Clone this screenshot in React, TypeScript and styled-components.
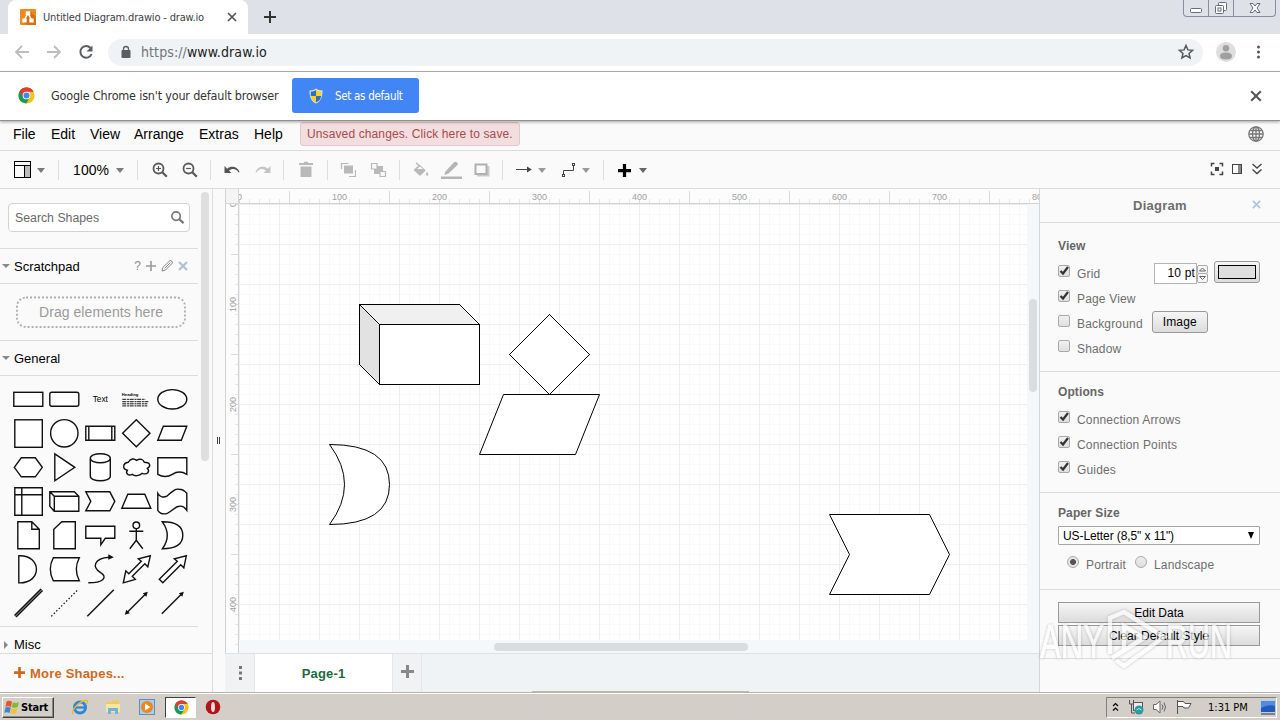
import React from 'react';
import styled, { createGlobalStyle } from 'styled-components';

const GlobalStyle = createGlobalStyle`
  * { box-sizing: border-box; }
  body { margin: 0; background: #fff; overflow: hidden; }
  svg { display: block; flex: none; }
`;

const sans = `'Liberation Sans', Arial, sans-serif`;
const ui = `'DejaVu Sans Condensed', 'DejaVu Sans', sans-serif`;

const Page = styled.div`
  width: 1280px;
  height: 720px;
  display: flex;
  flex-direction: column;
  font-family: ${sans};
  font-size: 12px;
  color: #000;
  white-space: nowrap;
  overflow: hidden;
`;

/* ---------- Browser chrome ---------- */
const TabStrip = styled.div`
  height: 34px;
  flex: none;
  display: flex;
  background: #dee1e8;
  padding-left: 8px;
`;
const BrowserTab = styled.div`
  width: 240px;
  height: 34px;
  background: #fff;
  border-radius: 8px 8px 0 0;
  display: flex;
  align-items: center;
  padding: 0 11px 0 12px;
  font: 11px ${ui};
  color: #3c4043;
`;
const TabTitle = styled.span`
  flex: 1;
  margin-left: 7px;
  letter-spacing: -0.17px;
`;
const NewTab = styled.div`
  width: 44px;
  display: flex;
  align-items: center;
  justify-content: center;
`;
const WindowButtons = styled.div`
  margin-left: auto;
  margin-right: 4px;
  height: 17px;
  display: flex;
  border: 1px solid #8a8e99;
  border-top: 0;
  border-radius: 0 0 4px 4px;
`;
const WindowButton = styled.div<{ $w: number }>`
  width: ${p => p.$w}px;
  display: flex;
  align-items: center;
  justify-content: center;
  & + & { border-left: 1px solid #8a8e99; }
`;
const AddressBar = styled.div`
  height: 38px;
  flex: none;
  display: flex;
  align-items: center;
  background: #fff;
  border-bottom: 1px solid #b2b2b2;
  padding: 0 12px 2px 12px;
`;
const NavIcons = styled.div`
  display: flex;
  gap: 12px;
  width: 96px;
`;
const Omnibox = styled.div`
  width: 1095px;
  height: 27px;
  border-radius: 14px;
  background: #eff3f6;
  display: flex;
  align-items: center;
  padding: 0 8px 0 12px;
  margin-top: 1px;
  font: 14px ${ui};
  color: #202124;
`;
const Url = styled.span`
  flex: 1;
  margin-left: 9px;
  letter-spacing: 0.1px;
  span { color: #70757a; }
`;
const BrowserActions = styled.div`
  display: flex;
  align-items: center;
  margin-left: 13px;
  gap: 12px;
`;
const InfoBar = styled.div`
  height: 49px;
  flex: none;
  display: flex;
  align-items: center;
  background: #fff;
  border-bottom: 1px solid #8f8f8f;
  box-shadow: 0 1px 3px rgba(0, 0, 0, 0.35);
  position: relative;
  padding: 0 18px 1px 18px;
  font: 12.5px ${ui};
  color: #333;
`;
const InfoText = styled.span`
  margin-left: 16px;
  width: 241px;
  letter-spacing: -0.19px;
`;
const DefaultButton = styled.div`
  width: 127px;
  height: 35px;
  border-radius: 3px;
  background: #4285f4;
  color: #fff;
  display: flex;
  align-items: center;
  padding-left: 16px;
  gap: 11px;
  font-size: 11.5px;
  letter-spacing: -0.3px;
  margin-right: auto;
`;

/* ---------- Application bars ---------- */
const MenuBar = styled.div`
  height: 30px;
  flex: none;
  display: flex;
  align-items: center;
  background: #fafafa;
  border-bottom: 1px solid #dcdcdc;
  padding: 0 16px 3px 13px;
  > svg { margin-bottom: 1px; }
`;
const MenuItem = styled.div<{ $w: number }>`
  width: ${p => p.$w}px;
  font-size: 14px;
`;
const Notice = styled.div`
  height: 24px;
  width: 220px;
  border: 1px solid #e8c6c8;
  background: #f2dede;
  border-radius: 3px;
  color: #a94a50;
  padding-left: 6px;
  line-height: 22px;
  letter-spacing: 0.12px;
  margin: 0 auto 1px 0;
`;
const ToolBar = styled.div`
  height: 38px;
  flex: none;
  display: flex;
  align-items: center;
  background: #fafafa;
  border-bottom: 1px solid #dcdcdc;
  padding: 1px 15px 0 8px;
`;
const Tool = styled.div<{ $w: number; $gap?: number }>`
  width: ${p => p.$w}px;
  margin-left: ${p => p.$gap ?? 0}px;
  display: flex;
  justify-content: center;
  font-size: 14px;
`;
const Rule = styled.i`
  width: 1px;
  height: 20px;
  background: #dedede;
`;
const Caret = styled.i<{ $c?: string }>`
  border: 4.5px solid transparent;
  border-top: 5px solid ${p => p.$c ?? '#7a7a7a'};
  border-bottom: 0;
`;
const ToolRight = styled.div`
  margin-left: auto;
  margin-bottom: 2px;
  display: flex;
  gap: 4px;
`;

/* ---------- Body ---------- */
const Body = styled.div`
  height: 503px;
  flex: none;
  display: flex;
`;
const Sidebar = styled.div`
  width: 213px;
  background: #fafafa;
  border-right: 1px solid #dcdcdc;
  display: flex;
  flex-direction: column;
`;
const SidebarScroll = styled.div`
  height: 464px;
  display: flex;
  overflow: hidden;
`;
const SidebarContent = styled.div`
  width: 198px;
`;
const ScrollThumb = styled.div<{ $w: number; $h: number; $x: number; $y: number; $c?: string }>`
  width: ${p => p.$w}px;
  height: ${p => p.$h}px;
  margin: ${p => p.$y}px 0 0 ${p => p.$x}px;
  border-radius: 4px;
  background: ${p => p.$c ?? '#d9dde0'};
`;
const SearchWrap = styled.div`
  height: 60px;
  padding: 14px 8px 0;
  border-bottom: 1px solid #dcdcdc;
`;
const SearchBox = styled.div`
  height: 29px;
  border: 1px solid #d3d3d3;
  border-radius: 4px;
  background: #fff;
  display: flex;
  align-items: center;
  justify-content: space-between;
  padding: 0 4px 0 6px;
  color: #6a6a6a;
  font-size: 12.3px;
`;
const SectionTitle = styled.div<{ $h?: number; $last?: boolean }>`
  height: ${p => p.$h ?? 35}px;
  border-bottom: ${p => (p.$last ? 0 : 1)}px solid #dcdcdc;
  display: flex;
  align-items: center;
  font-size: 13px;
  padding: 0 10px 0 2px;
  svg:first-child { margin-right: 4px; }
`;
const SectionTools = styled.div`
  margin-left: auto;
  display: flex;
  align-items: center;
  gap: 3px;
  color: #8a8a8a;
  font-size: 12px;
  span { margin-right: 2px; }
`;
const DropWrap = styled.div`
  height: 57px;
  border-bottom: 1px solid #dcdcdc;
  padding: 12px 12px 0 16px;
`;
const Palette = styled.div`
  height: 251px;
  border-bottom: 1px solid #dcdcdc;
  padding: 6px 8px 0 10px;
  display: grid;
  grid-template-columns: repeat(5, 36px);
  grid-auto-rows: 34px;
`;
const MoreShapes = styled.div`
  height: 39px;
  border-top: 1px solid #dcdcdc;
  display: flex;
  align-items: center;
  padding-left: 14px;
  gap: 5px;
  color: #cf6a1e;
  font: bold 13px ${sans};
  letter-spacing: 0.2px;
  svg { margin-bottom: 2px; }
`;
const Splitter = styled.div`
  width: 12px;
  background: #fafafa;
  display: flex;
  align-items: center;
  justify-content: center;
`;
const Editor = styled.div`
  width: 814px;
  display: flex;
  flex-direction: column;
`;
const EditorRow = styled.div<{ $h: number }>`
  height: ${p => p.$h}px;
  display: flex;
`;
const RulerClip = styled.div`
  width: 800px;
  overflow: hidden;
`;
const VTrack = styled.div`
  width: 12px;
  background: #f4f8fb;
`;
const HTrack = styled.div`
  flex: 1;
  background: #f5f8fb;
`;
const PageTabs = styled.div`
  height: 39px;
  background: #eff3f6;
  border-top: 1px solid #dde1e4;
  display: flex;
`;
const TabCell = styled.div<{ $w: number; $on?: boolean }>`
  width: ${p => p.$w}px;
  background: ${p => (p.$on ? '#fff' : '#f0f2f3')};
  border-right: 1px solid #e4e8ea;
  display: flex;
  align-items: center;
  justify-content: center;
  font: bold 13px ${sans};
  letter-spacing: 0.15px;
  color: #1d6b3d;
`;
const ProgressEdge = styled.i`
  width: 217px;
  height: 1px;
  margin: auto 0 0 110px;
  background: #b4bda8;
`;

/* ---------- Format panel ---------- */
const Panel = styled.div`
  width: 241px;
  background: #fafafa;
  border-left: 1px solid #d4d6d8;
  color: #6e6e6e;
`;
const PanelHead = styled.div`
  height: 34px;
  border-bottom: 1px solid #dcdcdc;
  display: flex;
  align-items: center;
  padding: 0 19px 0 93px;
  justify-content: space-between;
  font: bold 13px ${sans};
  letter-spacing: 0.25px;
  svg { margin-bottom: 2px; }
`;
const Group = styled.div<{ $h: number; $top: number }>`
  height: ${p => p.$h}px;
  padding: ${p => p.$top}px 20px 0 18px;
  border-bottom: 1px solid #dcdcdc;
`;
const GroupTitle = styled.div<{ $mb: number }>`
  font: bold 12px/14px ${sans};
  letter-spacing: 0.1px;
  margin-bottom: ${p => p.$mb}px;
  color: #666;
`;
const OptionRow = styled.div`
  height: 25px;
  display: flex;
  align-items: center;
  letter-spacing: 0.17px;
`;
const CheckBox = styled.span`
  width: 12px;
  height: 12px;
  margin: 0 7px 5px 0;
  border: 1px solid #a9a9a9;
  border-radius: 2px;
  background: linear-gradient(#f0f0f0, #dedede);
`;
const Stepper = styled.div`
  margin-left: auto;
  display: flex;
  align-items: center;
`;
const StepInput = styled.div`
  width: 43px;
  height: 21px;
  background: #fff;
  border: 1px solid #b4b4b4;
  color: #000;
  text-align: right;
  line-height: 19px;
  padding-right: 1px;
`;
const PushButton = styled.div<{ $w: number; $h: number; $r?: number; $gap?: number }>`
  width: ${p => p.$w}px;
  height: ${p => p.$h}px;
  border: 1px solid #999;
  border-radius: ${p => p.$r ?? 0}px;
  background: linear-gradient(#f6f6f6, #dcdcdc);
  color: #000;
  display: flex;
  align-items: center;
  justify-content: center;
  ${p => p.$gap && `margin: 0 0 3px ${p.$gap}px;`}
`;
const Swatch = styled.i`
  width: 38px;
  height: 14px;
  border: 1px solid #000;
  background: #dedede;
`;
const SelectBox = styled.div`
  height: 19px;
  margin-top: 6px;
  border: 1px solid #a6a6a6;
  border-radius: 1px;
  background: #fff;
  color: #000;
  display: flex;
  align-items: center;
  justify-content: space-between;
  padding: 0 4px;
  letter-spacing: -0.09px;
`;
const RadioRow = styled.div`
  display: flex;
  align-items: center;
  height: 25px;
  margin-top: 7px;
  padding-left: 9px;
  letter-spacing: 0.17px;
`;
const RadioLabel = styled.span`
  width: 49px;
`;
const Radio = styled.i<{ $on?: boolean }>`
  width: 12px;
  height: 12px;
  border: 1px solid #aaa;
  border-radius: 50%;
  margin: 0 7px 5px 0;
  background: ${p => (p.$on ? 'radial-gradient(circle, #555 0 2.6px, #e6e6e6 3.3px)' : 'linear-gradient(#eee, #dedede)')};
`;
const ButtonStack = styled.div`
  display: grid;
  gap: 2px;
`;
const Watermark = styled.div`
  position: absolute;
  left: 1036px;
  top: 604px;
  pointer-events: none;
  opacity: 0.68;
  filter: drop-shadow(0 0 1.5px rgba(0, 0, 0, 0.32));
`;

/* ---------- Taskbar ---------- */
const TaskBar = styled.div`
  height: 28px;
  flex: none;
  background: #d4cec8;
  border-top: 1px solid #b9b5ac;
  box-shadow: inset 0 1px 0 #fff;
  display: flex;
  align-items: center;
  padding: 1px 3px 0 2px;
`;
const StartButton = styled.div`
  width: 52px;
  height: 21px;
  border: 1px solid;
  border-color: #fff #404040 #404040 #fff;
  box-shadow: inset -1px -1px 0 #8c8880;
  display: flex;
  align-items: center;
  gap: 1px;
  padding-left: 1px;
  font: bold 11px ${ui};
  letter-spacing: -0.2px;
  margin-right: 10px;
`;
const TaskIcon = styled.div<{ $active?: boolean }>`
  width: 31px;
  height: 21px;
  margin-right: ${p => (p.$active ? 2 : 2.6)}px;
  display: flex;
  align-items: center;
  justify-content: center;
  ${p => p.$active && 'background:#fff;border:1px solid;border-color:#404040 #fff #fff #404040;padding-left:2px;'}
`;
const Tray = styled.div`
  margin-left: auto;
  width: 171px;
  height: 21px;
  border: 1px solid;
  border-color: #808080 #fff #fff #808080;
  display: flex;
  align-items: center;
  padding: 0 0 0 5px;
  gap: 8px;
  font: 11px ${ui};
  letter-spacing: 0;
`;
const Clock = styled.span`
  margin: 0 auto 0 8px;
`;

/* ---------- Drawings ---------- */
const Cross = ({ s = 10, c = '#555', w = 2 }: { s?: number; c?: string; w?: number }) => (
  <svg width={s} height={s} viewBox="0 0 10 10" stroke={c} strokeWidth={w}><path d="M1 1L9 9M9 1L1 9" /></svg>
);
const Plus = ({ s = 12, c = '#555', w = 2 }: { s?: number; c?: string; w?: number }) => (
  <svg width={s} height={s} viewBox="0 0 12 12" stroke={c} strokeWidth={w}><path d="M6 0V12M0 6H12" /></svg>
);
const ChromeLogo = ({ s = 18 }: { s?: number }) => (
  <svg width={s} height={s} viewBox="0 0 18 18">
    <circle cx="9" cy="9" r="8.5" fill="#fbc116" />
    <path d="M9 9L1.6 4.8A8.5 8.5 0 0 1 16.4 4.8H9Z" fill="#db3f34" />
    <path d="M9 9L1.6 4.8A8.5 8.5 0 0 0 8.7 17.5L12.6 11Z" fill="#119d59" />
    <path d="M1.6 4.8A8.5 8.5 0 0 1 16.4 4.8H9A4.2 4.2 0 0 0 5.3 11Z" fill="#db3f34" />
    <circle cx="9" cy="9" r="4.1" fill="#fff" />
    <circle cx="9" cy="9" r="3.2" fill="#4285f4" />
  </svg>
);
const DrawioLogo = () => (
  <svg width="16" height="16" viewBox="0 0 16 16">
    <rect width="16" height="16" rx="1" fill="#ee8a1d" />
    <path d="M10 2L16 8V16H7L3 13Z" fill="#d9700f" />
    <path d="M8 4L4.5 11M8 4L11.5 11" stroke="#fff" strokeWidth="1.5" />
    <path d="M5.7 2.3h4.6v4H5.7zM2.3 9.5h4.4v4H2.3zM9.3 9.5h4.4v4H9.3z" fill="#fff" />
  </svg>
);
const Shield = () => (
  <svg width="16" height="16" viewBox="0 0 16 16">
    <path d="M8 .5C6 2 4 2.4 1.5 2.4 1.3 9 3.5 13.5 8 15.6 12.5 13.5 14.7 9 14.5 2.4 12 2.4 10 2 8 .5Z" fill="#d8dfe6" />
    <path d="M8 2C6.3 3.2 4.6 3.5 2.8 3.6V8H8Z" fill="#2d6fb8" />
    <path d="M8 2C9.7 3.2 11.4 3.5 13.2 3.6V8H8Z" fill="#f8d21c" />
    <path d="M2.8 8C3.3 11 5 13.2 8 14.5V8Z" fill="#f8d21c" />
    <path d="M13.2 8C12.7 11 11 13.2 8 14.5V8Z" fill="#2d6fb8" />
  </svg>
);
const Magnifier = ({ sign }: { sign?: string }) => (
  <svg width="16" height="16" viewBox="0 0 16 16" fill="none" stroke="#5a5a5a">
    <circle cx="6.5" cy="6.5" r="5" strokeWidth="1.8" />
    <path d="M10.3 10.3L14.8 14.8" strokeWidth="2.3" />
    {sign && <path d={sign} strokeWidth="1.2" />}
  </svg>
);
const LayoutIcon = () => (
  <svg width="18" height="18" viewBox="0 0 18 18" fill="none" stroke="#000" shapeRendering="crispEdges">
    <rect x="12" y="5" width="5" height="12" fill="#bbb" stroke="none" />
    <path d="M1.5 .5H17.5V16.5H1.5ZM1.5 4.5H17.5M11.5 4.5V16.5" strokeWidth="1" />
  </svg>
);
const UndoIcon = ({ flip, c }: { flip?: boolean; c: string }) => (
  <svg width="16" height="16" viewBox="0 0 16 16">
    <path transform={flip ? 'translate(16 0) scale(-1 1)' : undefined} d="M.5 4V11H7.5L5 8.5C8 6 12.5 6.2 14.6 10.6L15.6 10.2C13.5 4.3 7 3.5 3.2 6.7Z" fill={c} />
  </svg>
);
const TrashIcon = () => (
  <svg width="16" height="18" viewBox="0 0 16 18" fill="#b9b9b9"><path d="M1 2H5.5L6.5 .8H9.5L10.500 2H15V4H1ZM2.5 5.5H13.5V16H2.5Z" /></svg>
);
const FrontIcon = () => (
  <svg width="16" height="16" viewBox="0 0 16 16" fill="none" stroke="#b9b9b9">
    <rect x="4" y="3.5" width="9" height="8" fill="#b9b9b9" stroke="none" />
    <path d="M1.5 7V1.500H8.5M9 14.5H15.5V8" strokeWidth="1.2" />
  </svg>
);
const BackIcon = () => (
  <svg width="16" height="16" viewBox="0 0 16 16" fill="#fafafa" stroke="#b9b9b9">
    <rect x="4" y="4" width="9" height="8" fill="#b9b9b9" stroke="none" />
    <path d="M1.5 1.5H7V7H1.5ZM10 9.5H15.5V14.5H10Z" strokeWidth="1.2" />
  </svg>
);
const BucketIcon = () => (
  <svg width="18" height="16" viewBox="0 0 18 16"><path d="M4 .8L7 3.5" stroke="#b9b9b9" strokeWidth="1.5" /><path d="M7.5 2.5L13.8 8.5 8 14 1.5 8Z" fill="#b9b9b9" /><path d="M5 7L8 4.5 11 7Z" fill="#fafafa" /><path d="M15 9.5C16.2 11.5 17 13.5 15.2 13.8 13.4 13.5 14 11.5 15 9.5Z" fill="#b9b9b9" /></svg>
);
const PenIcon = () => (
  <svg width="22" height="20" viewBox="0 0 22 20" fill="#b5b5b5"><path d="M1 16.5H22V19H1ZM5 12L14 2.300Q15.5 1 17.200 2.400 18.6 4 17.2 5.300L8.500 13.500 4.500 15Z" /></svg>
);
const SquareIcon = () => (
  <svg width="16" height="16" viewBox="0 0 16 16"><rect x="3" y="4" width="12.5" height="10.5" fill="#ccc" /><rect x="1.5" y="2.5" width="11" height="9.5" fill="#fafafa" stroke="#b0b0b0" strokeWidth="2" /></svg>
);
const ArrowIcon = () => (
  <svg width="16" height="10" viewBox="0 0 16 10"><path d="M0 4.5H13" stroke="#444" strokeWidth="1" /><path d="M11 1.5L15.8 4.5 11 7.5Z" fill="#444" /></svg>
);
const ConnectorIcon = () => (
  <svg width="16" height="16" viewBox="0 0 16 16" fill="none" stroke="#444"><rect x="1.5" y="12.5" width="2" height="2" /><path d="M2.5 12.5V8.5H12.5V4" /><rect x="11.500" y="1.500" width="2" height="2" /></svg>
);
const GlobeIcon = () => (
  <svg width="16" height="16" viewBox="0 0 16 16" fill="none" stroke="#777" strokeWidth="1.3"><circle cx="8" cy="8" r="7.2" /><ellipse cx="8" cy="8" rx="3.5" ry="7.2" /><path d="M8 1V15M1 8H15M2 4.5H14M2 11.5H14" /></svg>
);
const Disclosure = ({ open }: { open?: boolean }) => (
  <svg width="8" height="8" viewBox="0 0 8 8" fill="#8a8a8a"><path d={open ? 'M0 2H8L4 6Z' : 'M2 0L6 4 2 8Z'} /></svg>
);
const Check = () => (
  <svg width="10" height="10" viewBox="0 0 10 10" fill="none" stroke="#333" strokeWidth="2.2"><path d="M1.500 5L4 7.500 9 1" /></svg>
);

const shapes: React.ReactNode[] = [
  <rect x="-14.5" y="-7" width="29" height="14" />,
  <rect x="-14.5" y="-7" width="29" height="14" rx="2" />,
  <text x="0" y="3" fontSize="8.3" textAnchor="middle" fill="#000" stroke="none">Text</text>,
  <g>
    <text x="-14.5" y="-3.2" fontSize="4.2" fontWeight="bold" fill="#000" stroke="none">Heading</text>
    <path d="M-14 0H9M-14 2.4H12M-14 4.5H11M-14 6.6H11" strokeWidth="1" strokeDasharray="4 .8 2 .6" />
  </g>,
  <ellipse rx="14.5" ry="9.7" />,

  <rect x="-13.5" y="-13.5" width="27.5" height="27.5" />,
  <circle r="13.7" />,
  <path d="M-14.5 -7H14.5V7H-14.5ZM-11.5 -7V7M11.5 -7V7" />,
  <path d="M0 -13.5L13.7 0 0 13.5 -13.7 0Z" />,
  <path d="M-9 -7H14.5L9 7H-14.5Z" />,

  <path d="M-14 0L-7 -9.5H7L14 0 7 9.5H-7Z" />,
  <path d="M-9.5 -13.5L10.5 0 -9.5 13.5Z" />,
  <path d="M-10 -9V9C-10 15 10 15 10 9V-9C10 -15 -10 -15 -10 -9C-10 -3 10 -3 10 -9" />,
  <path d="M-8 -5C-6 -9 -2 -9 0 -7 4 -9 7 -8 8 -5 14 -5 15 -1 11 1 14 4 11 8 6 6 3 9 -2 9 -4 7 -8 9 -11 6 -9 3 -14 2 -14 -4 -8 -5Z" />,
  <path d="M-14.5 -9.5H14.5V7Q7 2.5 0 7T-14.5 7Z" />,

  <path d="M-13.5 -13.5H14V14H-13.5ZM-6.5 -13.5V14M-13.5 -6.5H14" />,
  <path d="M-14.5 -9.5H10L14.5 -5V10H-10L-14.5 5ZM-10 10V-5H14.5M-10 -5L-14.5 -9.5" />,
  <path d="M-14.5 -9.5H9.5L14.5 0 9.5 9.5H-14.5L-9.5 0Z" />,
  <path d="M-14.5 7L-8.5 -7H8.5L14.5 7Z" />,
  <path d="M-14.5 -8Q-11 -2 -5 -5.500C0 -10 3 -13 7 -12Q11 -12 14.5 -8V9Q11 4 7 5C3 5 0 10 -5 12Q-11 14 -14.5 9Z" />,

  <path d="M-10.5 -13.5H3.5L11 -6V13.5H-10.5ZM3.5 -13.5V-6H11" />,
  <path d="M-2.5 -13.5H11V13.5H-10.5V-6Z" />,
  <path d="M-14.5 -9H14.5V3H5L.5 9.5V3H-14.5Z" />,
  <path d="M0 -6.500V5M-7 -4H7M0 5L-6.5 13.5M0 5L6.5 13.5M3.3 -10A3.3 3.3 0 1 1 -3.3 -10A3.3 3.3 0 1 1 3.3 -10" />,
  <path d="M-10 -13.5Q10.5 -13.5 10.5 0T-10 13.5Q0 0 -10 -13.5Z" />,

  <path d="M-9.5 -13.5C14 -14.5 14 14.5 -9.5 13.5Z" />,
  <path d="M-11 -11.5H15Q9 0 15 11.500H-11Q-17 0 -11 -11.5Z" />,
  <g><path d="M-12 13.500C3 13.5 8 8 0 3S-7 -11 9 -12" /><path d="M8 -15L13.5 -12 8 -9.5Z" fill="#111" stroke="none" /></g>,
  <path d="M14 -13.5L11.5 -2.5 8.5 -5.5 -4 7 -1 10 -13 13.5 -10.5 1.5 -7.5 4.5 5 -8 2 -10.5Z" />,
  <path d="M14 -13.5L11.5 -1.5 8.5 -4.5 -9.5 13.5 -13 10 5 -8 2 -10.5Z" />,

  <g><path d="M-13 13L13.5 -13.5" strokeWidth="3.600" /><path d="M-13 13L13.5 -13.5" stroke="#ccc" strokeWidth=".8" /></g>,
  <path d="M-13 13L13.5 -13.5" strokeDasharray="1.5 2" strokeWidth="1.2" />,
  <path d="M-13 13L13.5 -13.5" />,
  <g><path d="M-10 10L10 -10" /><path d="M11.5 -11.5L10 -6.5 6.5 -10ZM-11.5 11.5L-10 6.5 -6.5 10Z" fill="#111" stroke="none" /></g>,
  <g><path d="M-10.5 10.5L10 -10" /><path d="M11.5 -11.5L10 -6.5 6.5 -10Z" fill="#111" stroke="none" /></g>,
];

const Ruler = ({ vertical }: { vertical?: boolean }) => {
  const len = vertical ? 450 : 800;
  const marks: React.ReactNode[] = [];
  for (let u = 0; u < len; u += 10) {
    const p = u + 0.5;
    const t = u % 100 === 50 ? (vertical ? 8 : 12) : u % 50 === 0 ? 3 : 4;
    const off = 14 - t;
    marks.push(<path key={u} d={vertical ? `M${off} ${p}H14` : `M${p} ${off}V14`} stroke={u % 50 ? '#e6e6e6' : '#dadada'} />);
  }
  const labels: React.ReactNode[] = [];
  for (let u = 0; u <= len; u += 100) {
    labels.push(
      vertical
        ? <text key={u} transform={`translate(10.5 ${u + 0.5}) rotate(-90)`} textAnchor="middle">{u}</text>
        : <text key={u} x={u + 0.5} y="11" textAnchor="middle">{u}</text>
    );
  }
  return (
    <svg width={vertical ? 14 : 800} height={vertical ? 449 : 15} fontFamily={sans} fontSize="9" fill="#a0a0a0">
      <rect width="800" height="800" fill="#fcfcfc" />
      {marks}
      {labels}
      <path d={vertical ? 'M13.5 0V450M.5 0V450' : 'M0 14.5H800'} stroke="#d2d2d2" />
    </svg>
  );
};

const Canvas = () => (
  <svg width="788" height="436" viewBox="239 204 788 436" fill="#fff" stroke="#000" shapeRendering="crispEdges">
    <defs>
      <pattern id="grid" x="239" y="204" width="40" height="40" patternUnits="userSpaceOnUse">
        <path d="M10.5 0V40M20.5 0V40M30.5 0V40M0 10.5H40M0 20.5H40M0 30.5H40" stroke="#f9f9f9" />
        <path d="M.5 0V40M0 .5H40" stroke="#eeeeee" />
      </pattern>
    </defs>
    <rect x="239" y="204" width="788" height="436" stroke="none" />
    <rect x="239" y="204" width="788" height="436" fill="url(#grid)" stroke="none" />
    <path d="M359.5 304.5H459.5L479.5 324.5V384.5H379.5L359.5 364.5Z" />
    <path d="M359.5 304.5H459.5L479.5 324.5H379.5Z" fill="#f0f0f0" />
    <path d="M359.5 304.5L379.5 324.5V384.5L359.5 364.5Z" fill="#e2e2e2" />
    <path d="M549.5 314.5L589.5 354.5 549.5 394.5 509.5 354.5Z" />
    <g shapeRendering="auto">
      <path d="M503.5 394.5H599.5L575.5 454.5H479.5Z" />
      <path d="M329.5 444.5Q389.5 444.5 389.5 484.5T329.5 524.5Q359.5 484.5 329.5 444.5Z" />
      <path d="M829.5 514.5H929.5L949.5 554.5 929.5 594.5H829.5L849.5 554.5Z" />
    </g>
  </svg>
);

const Separator = ({ w, gap }: { w: number; gap?: number }) => <Tool $w={w} $gap={gap}><Rule /></Tool>;
const CheckOption = ({ on, label, children }: { on?: boolean; label: string; children?: React.ReactNode }) => (
  <OptionRow><CheckBox>{on && <Check />}</CheckBox>{label}{children}</OptionRow>
);

export default function App() {
  return (
    <Page>
      <GlobalStyle />
      <TabStrip>
        <BrowserTab><DrawioLogo /><TabTitle>Untitled Diagram.drawio - draw.io</TabTitle><Cross s={10} w={1.7} /></BrowserTab>
        <NewTab><Plus c="#333" /></NewTab>
        <WindowButtons>
          <WindowButton $w={24}><svg width="14" height="14" fill="#fff" stroke="#666c78"><rect x="1.5" y="7.5" width="11" height="4" rx="1" /></svg></WindowButton>
          <WindowButton $w={25}><svg width="14" height="14" fill="#fff" stroke="#666c78"><rect x="4.5" y="1.5" width="8" height="8" rx="1" /><rect x="1.5" y="4.5" width="8" height="8" rx="1" /><rect x="4" y="7" width="3" height="3" /></svg></WindowButton>
          <WindowButton $w={42}><svg width="14" height="14" fill="#fff" stroke="#666c78"><path d="M2 2.5H5L7 5 9 2.5H12L9 7 12 11.5H9L7 9 5 11.5H2L5 7Z" /></svg></WindowButton>
        </WindowButtons>
      </TabStrip>
      <AddressBar>
        <NavIcons>
          <svg width="20" height="20" fill="none" stroke="#bdbdbd" strokeWidth="1.8"><path d="M17 10H4M10 4L4 10 10 16" /></svg>
          <svg width="20" height="20" fill="none" stroke="#bdbdbd" strokeWidth="1.8"><path d="M3 10H16M10 4L16 10 10 16" /></svg>
          <svg width="20" height="20" fill="none" stroke="#5a5d61" strokeWidth="2"><path d="M14.5 6A5.8 5.8 0 1 0 15.6 12" /><path d="M16.5 3.500V9.500H10.500Z" fill="#5a5d61" stroke="none" /></svg>
        </NavIcons>
        <Omnibox>
          <svg width="12" height="14" viewBox="0 0 12 14"><rect x="1.5" y="5" width="9" height="8" rx="1" fill="#5a5d61" /><path d="M3.5 5.500V4A2.5 2.5 0 0 1 8.5 4V5.5" fill="none" stroke="#5a5d61" strokeWidth="1.3" /></svg>
          <Url><span>https://</span>www.draw.io</Url>
          <svg width="18" height="18" viewBox="0 0 18 18" fill="none" stroke="#55585c" strokeWidth="1.5"><path d="M9 2.5L10.9 6.9 15.6 7.3 12 10.4 13.1 15 9 12.6 4.9 15 6 10.4 2.4 7.3 7.1 6.9Z" /></svg>
        </Omnibox>
        <BrowserActions>
          <svg width="20" height="20"><circle cx="10" cy="10" r="10" fill="#dedede" /><circle cx="10" cy="6.3" r="3.2" fill="#a0a0a0" /><path d="M4 14Q4 10.5 10 10.5T16 14 10 17.5 4 14Z" fill="#a0a0a0" /></svg>
          <svg width="20" height="20" fill="#55585c"><circle cx="10.5" cy="5" r="1.5" /><circle cx="10.5" cy="10" r="1.5" /><circle cx="10.5" cy="15" r="1.5" /></svg>
        </BrowserActions>
      </AddressBar>
      <InfoBar>
        <ChromeLogo s={17} />
        <InfoText>Google Chrome isn't your default browser</InfoText>
        <DefaultButton><Shield />Set as default</DefaultButton>
        <Cross s={12} w={1.7} />
      </InfoBar>
      <MenuBar>
        <MenuItem $w={38}>File</MenuItem>
        <MenuItem $w={39}>Edit</MenuItem>
        <MenuItem $w={44}>View</MenuItem>
        <MenuItem $w={65}>Arrange</MenuItem>
        <MenuItem $w={55}>Extras</MenuItem>
        <MenuItem $w={46}>Help</MenuItem>
        <Notice>Unsaved changes. Click here to save.</Notice>
        <GlobeIcon />
      </MenuBar>
      <ToolBar>
        <Tool $w={28}><LayoutIcon /></Tool>
        <Tool $w={10}><Caret /></Tool>
        <Separator w={24} />
        <Tool $w={42}>100%</Tool>
        <Tool $w={16}><Caret /></Tool>
        <Separator w={18} />
        <Tool $w={28}><Magnifier sign="M6.5 4V9M4 6.5H9" /></Tool>
        <Tool $w={32}><Magnifier sign="M4 6.5H9" /></Tool>
        <Separator w={8} />
        <Tool $w={36}><UndoIcon c="#555" /></Tool>
        <Tool $w={26}><UndoIcon flip c="#c4c4c4" /></Tool>
        <Separator w={14} />
        <Tool $w={32}><TrashIcon /></Tool>
        <Separator w={10} />
        <Tool $w={32}><FrontIcon /></Tool>
        <Tool $w={28}><BackIcon /></Tool>
        <Separator w={14} />
        <Tool $w={30}><BucketIcon /></Tool>
        <Tool $w={30}><PenIcon /></Tool>
        <Tool $w={32}><SquareIcon /></Tool>
        <Separator w={8} />
        <Tool $w={24} $gap={6}><ArrowIcon /></Tool>
        <Tool $w={12}><Caret $c="#999" /></Tool>
        <Tool $w={22} $gap={10}><ConnectorIcon /></Tool>
        <Tool $w={12}><Caret $c="#999" /></Tool>
        <Separator w={10} gap={6} />
        <Tool $w={20} $gap={6}><Plus s={13} c="#000" w={3} /></Tool>
        <Tool $w={10} $gap={4}><Caret $c="#666" /></Tool>
        <ToolRight>
          <svg width="16" height="16" fill="none" stroke="#444" strokeWidth="1.5"><path d="M2.5 5.500V2.500H5.5M10.5 2.500H13.5V5.5M13.5 10.5V13.5H10.5M5.5 13.5H2.5V10.5" /><rect x="6" y="6" width="4" height="4" fill="#444" stroke="none" /></svg>
          <svg width="16" height="16" fill="none" stroke="#444"><rect x="3.5" y="3.5" width="9" height="9" /><rect x="9" y="4" width="3" height="8" fill="#888" stroke="none" /></svg>
          <svg width="16" height="16" fill="none" stroke="#444" strokeWidth="1.4"><path d="M3.5 3L8 7 12.5 3M3.5 8.5L8 12.5 12.5 8.5" /></svg>
        </ToolRight>
      </ToolBar>
      <Body>
        <Sidebar>
          <SidebarScroll>
            <SidebarContent>
              <SearchWrap><SearchBox>Search Shapes<svg width="15" height="15" viewBox="0 0 16 16" fill="none" stroke="#777"><circle cx="6.5" cy="6.5" r="4.500" strokeWidth="1.8" /><path d="M10 10L14.5 14" strokeWidth="2.3" /></svg></SearchBox></SearchWrap>
              <SectionTitle>
                <Disclosure open />Scratchpad
                <SectionTools>
                  <span>?</span>
                  <Plus s={10} c="#999" w={1.9} />
                  <svg width="16" height="14" viewBox="0 0 16 14" fill="none" stroke="#888"><path d="M3 12L3.8 8.5 11 1.5Q13.5 1.5 13.5 4L6.500 11ZM5.5 9.5L11.5 3.500" /></svg>
                  <Cross s={10} c="#b4bfd4" w={2.2} />
                </SectionTools>
              </SectionTitle>
              <DropWrap>
                <svg width="170" height="32"><rect x="1" y="1.500" width="168" height="29.500" rx="9" fill="none" stroke="#b0b0b0" strokeWidth="1.900" strokeDasharray="2 2" /><text x="85" y="21" textAnchor="middle" fontFamily={sans} fontSize="14" letterSpacing=".06" fill="#9a9a9a">Drag elements here</text></svg>
              </DropWrap>
              <SectionTitle><Disclosure open />General</SectionTitle>
              <Palette>
                {shapes.map((shape, i) => (
                  <svg key={i} width="36" height="34" viewBox="-18.300 -17.300 36 34" fill="#fff" stroke="#111" strokeWidth="1.4" fontFamily={sans}>{shape}</svg>
                ))}
              </Palette>
              <SectionTitle $last><Disclosure />Misc</SectionTitle>
            </SidebarContent>
            <ScrollThumb $w={8} $h={269} $x={3} $y={3} $c="#dfdfdf" />
          </SidebarScroll>
          <MoreShapes><Plus s={11} c="#cf6a1e" w={3} />More Shapes...</MoreShapes>
        </Sidebar>
        <Splitter><svg width="4" height="8" stroke="#444"><path d="M.5 0V7M2.5 0V7" /></svg></Splitter>
        <Editor>
          <EditorRow $h={15}>
            <svg width="14" height="15"><rect width="14" height="15" fill="#f4f4f4" /><path d="M.5 0V14.5H13.5V0" fill="none" stroke="#d4d4d4" /></svg>
            <RulerClip><Ruler /></RulerClip>
          </EditorRow>
          <EditorRow $h={449}>
            <Ruler vertical />
            <div>
              <EditorRow $h={436}>
                <Canvas />
                <VTrack><ScrollThumb $w={8} $h={93} $x={2} $y={95} /></VTrack>
              </EditorRow>
              <EditorRow $h={13}><HTrack><ScrollThumb $w={254} $h={8} $x={255} $y={3} /></HTrack></EditorRow>
            </div>
          </EditorRow>
          <PageTabs>
            <TabCell $w={30}><svg width="4" height="14" fill="#777"><path d="M1 0H4V3H1ZM1 5.5H4V8.5H1ZM1 11H4V14H1Z" /></svg></TabCell>
            <TabCell $w={138} $on>Page-1</TabCell>
            <TabCell $w={29}><svg width="13" height="16" stroke="#888" strokeWidth="3"><path d="M6.500 0V13M0 6.500H13" /></svg></TabCell>
            <ProgressEdge />
          </PageTabs>
        </Editor>
        <Panel>
          <PanelHead>Diagram<Cross s={9} c="#aec4e4" w={2} /></PanelHead>
          <Group $h={149} $top={16}>
            <GroupTitle $mb={8}>View</GroupTitle>
            <CheckOption on label="Grid">
              <Stepper>
                <StepInput>10 pt</StepInput>
                <svg width="12" height="18" fill="#f6f6f6" stroke="#aaa"><rect x=".5" y=".5" width="10" height="8" rx="1.5" /><rect x=".5" y="8.5" width="10" height="9" rx="1.5" /><path d="M2.500 6L5.5 3 8.500 6ZM2.500 11.500L5.5 14.500 8.500 11.500Z" stroke="#666" /></svg>
              </Stepper>
              <PushButton $w={46} $h={22} $r={3} $gap={5}><Swatch /></PushButton>
            </CheckOption>
            <CheckOption on label="Page View" />
            <CheckOption label="Background">
              <PushButton $w={56} $h={22} $r={3} $gap={9}>Image</PushButton>
            </CheckOption>
            <CheckOption label="Shadow" />
          </Group>
          <Group $h={121} $top={13}>
            <GroupTitle $mb={8}>Options</GroupTitle>
            <CheckOption on label="Connection Arrows" />
            <CheckOption on label="Connection Points" />
            <CheckOption on label="Guides" />
          </Group>
          <Group $h={97} $top={13}>
            <GroupTitle $mb={0}>Paper Size</GroupTitle>
            <SelectBox>US-Letter (8,5" x 11")<svg width="8" height="8"><path d="M1 0H7L4 7Z" fill="#000" /></svg></SelectBox>
            <RadioRow><Radio $on /><RadioLabel>Portrait</RadioLabel><Radio />Landscape</RadioRow>
          </Group>
          <Group $h={69} $top={12}>
            <ButtonStack>
              <PushButton $w={202} $h={21}>Edit Data</PushButton>
              <PushButton $w={202} $h={21}>Clear Default Style</PushButton>
            </ButtonStack>
          </Group>
        </Panel>
      </Body>
      <TaskBar>
        <StartButton>
          <svg width="16" height="16" viewBox="0 0 16 16"><path d="M2.5 2.5Q5 1 8 2.8L7 8Q4 6.5 1.5 8Z" fill="#e4572a" /><path d="M8.8 3.2Q11.5 4.8 15 3L13.8 8Q11 9.5 7.8 8.2Z" fill="#7dbb3c" /><path d="M1.3 8.8Q4 7.3 6.8 8.8L5.6 14Q3 12.5 .3 14Z" fill="#3a87d8" /><path d="M7.6 9.2Q10.5 10.5 13.5 9L12.3 14Q9.5 15.5 6.5 14.2Z" fill="#f6c12b" /></svg>
          Start
        </StartButton>
        <TaskIcon><svg width="18" height="18" viewBox="0 0 18 18" fill="none"><circle cx="9" cy="9.5" r="5.5" stroke="#2b87d8" strokeWidth="3" /><path d="M4 9.5H14" stroke="#2b87d8" strokeWidth="2.2" /><path d="M2 16C0 12 9 2 16 2.5 17 3 16 5 15.5 6" stroke="#e9b738" strokeWidth="1.3" /></svg></TaskIcon>
        <TaskIcon><svg width="16" height="16"><path d="M1 3H6L7 1.5H14V13H1Z" fill="#eccb62" /><path d="M1 5H15V13H1Z" fill="#f7e6a2" /><path d="M3 9H13V15H10V12H6V15H3Z" fill="#6fb4dc" /></svg></TaskIcon>
        <TaskIcon><svg width="16" height="16"><rect x=".5" y=".5" width="15" height="15" fill="#a9cdea" stroke="#5d90bd" /><circle cx="8" cy="8" r="6" fill="#f08519" /><path d="M6 4.5L11.5 8 6 11.5Z" fill="#fff" /></svg></TaskIcon>
        <TaskIcon $active><ChromeLogo s={15} /></TaskIcon>
        <TaskIcon><svg width="16" height="16"><circle cx="8" cy="8" r="7.3" fill="#b31217" /><ellipse cx="8" cy="8" rx="2" ry="5" fill="#f3dcdc" /></svg></TaskIcon>
        <Tray>
          <svg width="8" height="12" fill="none" stroke="#000" strokeWidth="1.2"><path d="M1 5L3.5 2.5 6 5M1 9.5L3.5 7 6 9.5" /></svg>
          <svg width="16" height="16"><rect x="5.5" y="3.5" width="9" height="8" fill="#e8edf0" stroke="#555" /><path d="M1.5 1V5H5.5V1M3.5 5V14H7" fill="none" stroke="#555" /><circle cx="11" cy="11" r="4.5" fill="#2c9a9e" /><path d="M8.5 11Q11 8 13.5 11" stroke="#bfe7e4" fill="none" /></svg>
          <svg width="16" height="16" fill="#fff" stroke="#666"><path d="M1.5 5.500H4L8 2V14L4 10.5H1.5Z" /><path d="M10 5.500Q12 8 10 10.5M12 3.500Q15 8 12 12.5" fill="none" /></svg>
          <svg width="16" height="16" fill="#fff" stroke="#555"><path d="M1.5 1V15M1.5 2.5H7.5L9 4.5H15L12.5 9H8L7 7.500H1.5Z" /></svg>
          <Clock>1:31 PM</Clock>
          <svg width="16" height="15"><rect x=".5" y=".5" width="15" height="12" fill="#2459b8" stroke="#b8cdea" /><path d="M1 1H15V6Q8 4 1 8Z" fill="#4f8be0" /><path d="M1 14H15" stroke="#333" /></svg>
        </Tray>
      </TaskBar>
      <Watermark>
        <svg width="200" height="72" fontFamily="Liberation Sans Narrow, Liberation Sans, sans-serif" fontSize="48" fill="#fff" stroke="#fff">
          <text x="4" y="54" strokeWidth=".8" textLength="64" lengthAdjust="spacingAndGlyphs">ANY</text>
          <text x="130" y="54" strokeWidth=".8" textLength="66" lengthAdjust="spacingAndGlyphs">RUN</text>
          <path d="M74 50V14L88 8L128 33L88 62L80 56M88 46V22L108 34L76 54" fill="none" strokeWidth="4.500" />
        </svg>
      </Watermark>
    </Page>
  );
}
